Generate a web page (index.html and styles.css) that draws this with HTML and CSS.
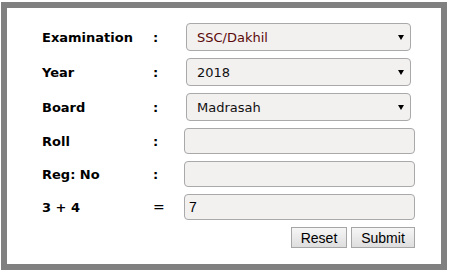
FILE: index.html
```html
<!DOCTYPE html>
<html>
<head>
<meta charset="utf-8">
<link rel="stylesheet" href="styles.css">
</head>
<body>
<div class="frame">
  <form class="form">
    <div class="label">Examination</div><div class="sep">:</div>
    <div class="select exam"><span>SSC/Dakhil</span><i class="arrow"></i></div>

    <div class="label">Year</div><div class="sep">:</div>
    <div class="select"><span>2018</span><i class="arrow"></i></div>

    <div class="label">Board</div><div class="sep">:</div>
    <div class="select"><span>Madrasah</span><i class="arrow"></i></div>

    <div class="label">Roll</div><div class="sep">:</div>
    <div class="input"></div>

    <div class="label">Reg: No</div><div class="sep">:</div>
    <div class="input"></div>

    <div class="label">3 + 4</div><div class="sep eq">=</div>
    <div class="input">7</div>

    <div class="buttons">
      <button type="button" class="btn reset">Reset</button>
      <button type="button" class="btn submit">Submit</button>
    </div>
  </form>
</div>
</body>
</html>
```

FILE: styles.css
```css
html, body {
  margin: 0;
  padding: 0;
  background: #fff;
}
.frame {
  box-sizing: border-box;
  margin: 2px 0 0 1px;
  width: 446px;
  height: 268px;
  border: 6px solid #808080;
  background: #fff;
  padding: 15px 0 0 35px;
}
.form {
  display: grid;
  grid-template-columns: 111px 31px 231px;
  row-gap: 7px;
  align-items: center;
}
.label {
  font-family: "DejaVu Sans", Verdana, sans-serif;
  font-weight: bold;
  font-size: 13px;
  color: #000;
}
.sep {
  font-family: "DejaVu Sans", Verdana, sans-serif;
  font-weight: bold;
  font-size: 13px;
  color: #000;
}
.sep.eq {
  font-weight: normal;
  font-size: 14px;
}
.select {
  box-sizing: border-box;
  margin-left: 2px;
  width: 225px;
  height: 28px;
  border: 1px solid #a9a9a9;
  border-radius: 4px;
  background: #f3f0f0;
  display: flex;
  align-items: center;
  justify-content: space-between;
  padding: 0 6px 0 10px;
  font-family: "DejaVu Sans", Verdana, sans-serif;
  font-size: 13px;
  color: #111;
}
.select.exam span {
  color: #5a0a0a;
}
.arrow {
  width: 0;
  height: 0;
  border-left: 3.5px solid transparent;
  border-right: 3.5px solid transparent;
  border-top: 5px solid #000;
}
.input {
  box-sizing: border-box;
  width: 231px;
  height: 26px;
  border: 1px solid #a9a9a9;
  border-radius: 4px;
  background: #f3f0f0;
  font-family: "Liberation Sans", Arial, sans-serif;
  font-size: 14px;
  color: #000;
  padding-left: 4px;
  display: flex;
  align-items: center;
}
.buttons {
  grid-column: 1 / 4;
  display: flex;
  justify-content: flex-end;
  gap: 4px;
  margin-top: 0;
}
.btn {
  box-sizing: border-box;
  height: 21px;
  padding: 0;
  border: 1px solid #a6a6a6;
  border-radius: 0;
  background: linear-gradient(#f6f6f6, #dedede);
  font-family: "Liberation Sans", Arial, sans-serif;
  font-size: 14px;
  color: #000;
}
.reset { width: 56px; }
.submit { width: 64px; }
```
